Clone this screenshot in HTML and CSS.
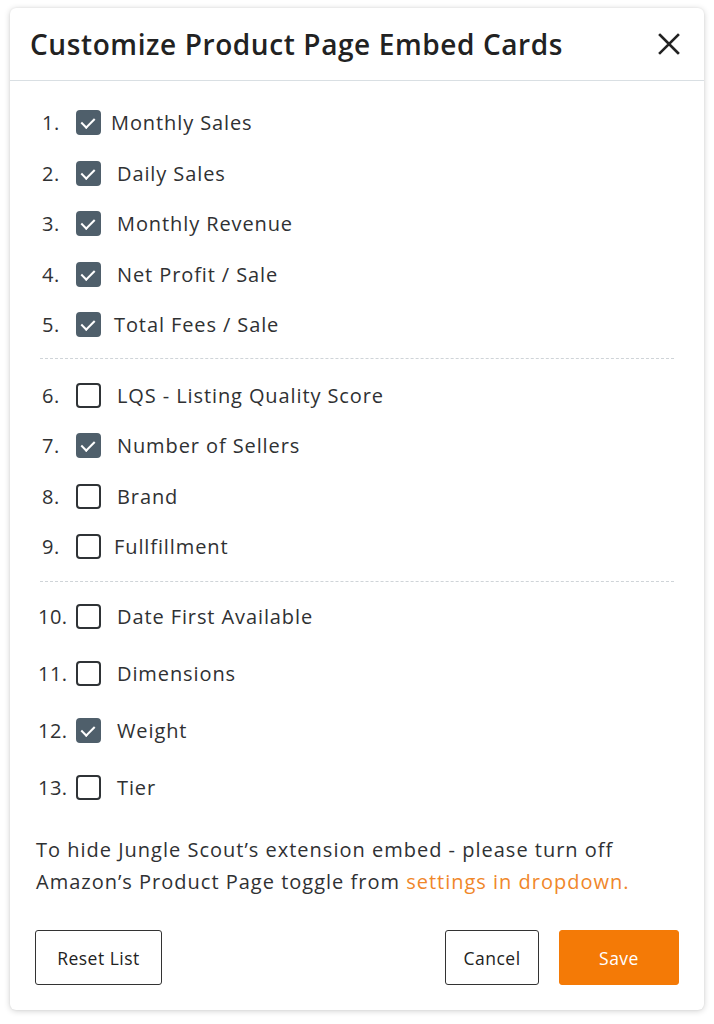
FILE: index.html
```html
<!DOCTYPE html>
<html lang="en">
<head>
<meta charset="utf-8">
<title>Customize Product Page Embed Cards</title>
<link rel="stylesheet" href="styles.css">
</head>
<body>
<div class="modal">
  <header class="modal-header">
    <h1 class="title">Customize Product Page Embed Cards</h1>
    <button class="close" aria-label="Close">
      <svg width="22" height="22" viewBox="0 0 22 22"><path d="M2 2 L20 20 M20 2 L2 20" stroke="#222" stroke-width="2.6" stroke-linecap="square"/></svg>
    </button>
  </header>
  <div class="modal-body">
    <ul class="group">
      <li class="row"><span class="num">1.</span><span class="box on"></span><span class="label g10">Monthly Sales</span></li>
      <li class="row"><span class="num">2.</span><span class="box on"></span><span class="label">Daily Sales</span></li>
      <li class="row"><span class="num">3.</span><span class="box on"></span><span class="label">Monthly Revenue</span></li>
      <li class="row"><span class="num">4.</span><span class="box on"></span><span class="label">Net Profit / Sale</span></li>
      <li class="row"><span class="num">5.</span><span class="box on"></span><span class="label g13">Total Fees / Sale</span></li>
    </ul>
    <hr class="divider first">
    <ul class="group">
      <li class="row"><span class="num">6.</span><span class="box"></span><span class="label">LQS - Listing Quality Score</span></li>
      <li class="row"><span class="num">7.</span><span class="box on"></span><span class="label">Number of Sellers</span></li>
      <li class="row"><span class="num">8.</span><span class="box"></span><span class="label">Brand</span></li>
      <li class="row"><span class="num">9.</span><span class="box"></span><span class="label g13">Fullfillment</span></li>
    </ul>
    <hr class="divider second">
    <ul class="group tall">
      <li class="row"><span class="num wide">10.</span><span class="box"></span><span class="label">Date First Available</span></li>
      <li class="row"><span class="num wide">11.</span><span class="box"></span><span class="label">Dimensions</span></li>
      <li class="row"><span class="num wide">12.</span><span class="box on"></span><span class="label">Weight</span></li>
      <li class="row"><span class="num wide">13.</span><span class="box"></span><span class="label">Tier</span></li>
    </ul>
    <p class="note">To hide Jungle Scout’s extension embed - please turn off Amazon’s Product Page toggle from <a class="link" href="#">settings in dropdown.</a></p>
    <div class="actions">
      <button class="btn reset">Reset List</button>
      <div class="actions-right">
        <button class="btn cancel">Cancel</button>
        <button class="btn primary">Save</button>
      </div>
    </div>
  </div>
</div>
</body>
</html>
```
FILE: styles.css
```css
* { box-sizing: border-box; }
html, body { margin: 0; padding: 0; background: #ffffff; }
body {
  font-family: "Open Sans", "Liberation Sans", sans-serif;
  color: #2f3133;
  padding: 8px 10px 14px 10px;
}
.modal {
  width: 694px;
  height: 1002px;
  background: #fff;
  border-radius: 6px;
  box-shadow: 0 1px 6px rgba(0,0,0,0.18), 0 0 2px rgba(0,0,0,0.08);
  display: flex;
  flex-direction: column;
}
.modal-header {
  height: 73px;
  border-bottom: 1px solid #d9dfe3;
  display: flex;
  align-items: center;
  justify-content: space-between;
  padding: 0 24px 0 20px;
}
.title {
  margin: 0;
  font-size: 28px;
  font-weight: 600;
  color: #222;
  letter-spacing: 0.6px;
}
.close {
  border: 0;
  background: none;
  padding: 0;
  width: 22px;
  height: 22px;
  display: flex;
}
.modal-body {
  padding: 17px 25px 25px 25px;
  display: flex;
  flex-direction: column;
}
.group {
  list-style: none;
  margin: 0;
  padding: 0 0 0 7px;
}
.row {
  height: 50.5px;
  display: flex;
  align-items: center;
  font-size: 20px;
  letter-spacing: 0.9px;
}
.group.tall .row { height: 57px; }
.num {
  width: 34px;
  flex: none;
  letter-spacing: 0.5px;
}
.num.wide {
  width: 38px;
  margin-left: -4px;
}
.box {
  width: 25px;
  height: 25px;
  flex: none;
  border: 2px solid #2f3336;
  border-radius: 4px;
  position: relative;
}
.box.on {
  background: #4f5f6b;
  border-color: #4f5f6b;
}
.box.on::after {
  content: "";
  position: absolute;
  left: 6px;
  top: 3px;
  width: 6px;
  height: 11px;
  border-right: 2.4px solid #fff;
  border-bottom: 2.4px solid #fff;
  transform: rotate(45deg);
}
.label { margin-left: 16px; }
.label.g10 { margin-left: 10px; }
.label.g13 { margin-left: 13px; }
.divider {
  border: 0;
  border-top: 1px dashed #cfd4d8;
  margin: 8px 5px 11px 5px;
}
.divider.second { margin: 9px 5px 6px 5px; }
.note {
  margin: 18px 0 0 1px;
  max-width: 600px;
  font-size: 20px;
  line-height: 32px;
  letter-spacing: 1px;
}
.link { color: #f0872a; text-decoration: none; }
.actions {
  margin-top: 32px;
  display: flex;
  justify-content: space-between;
}
.actions-right { display: flex; gap: 20px; }
.btn {
  height: 55px;
  padding: 0;
  border: 1.5px solid #333;
  border-radius: 3px;
  background: #fff;
  font-family: "Open Sans", "Liberation Sans", sans-serif;
  font-size: 17.5px;
  font-weight: 500;
  color: #222;
  letter-spacing: 0.5px;
}
.btn.reset { width: 127px; }
.btn.cancel { width: 94px; }
.btn.primary {
  background: #f47a06;
  border-color: #f47a06;
  color: #fff;
  width: 120px;
}
```
